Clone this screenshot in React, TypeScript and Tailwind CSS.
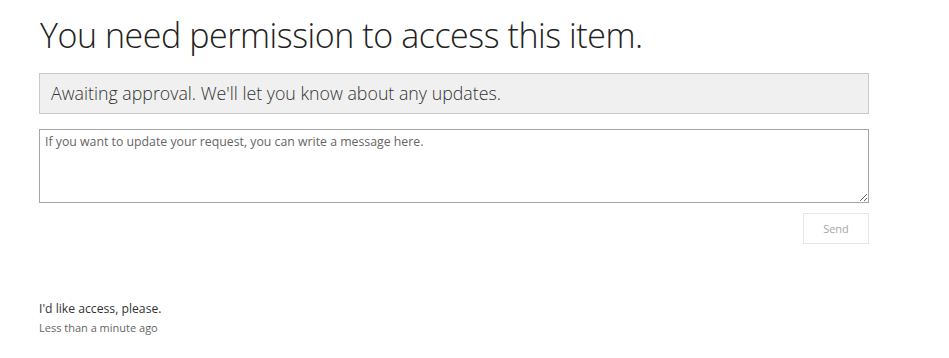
import React from "react";

export default function App() {
  return (
    <div className="w-[949px] h-[358px] bg-white pl-[39px] pt-[10px] text-[#333]" style={{ fontFamily: '"Open Sans", "Noto Sans", sans-serif' }}>
      <div className="w-[830px] flex flex-col">
        <h1 className="text-[34px] leading-[50px] font-light text-[#222] tracking-[-0.45px] pl-[1px]">You need permission to access this item.</h1>
        <div className="mt-[13px] h-[41px] border border-[#c8c8c8] bg-[#f0f0f0] flex items-center pl-[11px] text-[17.8px] font-light text-[#333]">
          Awaiting approval. We'll let you know about any updates.
        </div>
        <textarea
          className="mt-[15px] h-[74px] w-full border border-[#a6a6a6] px-[5px] py-[3px] text-[12.3px] text-[#333] placeholder:text-[#666] outline-none"
          style={{ fontFamily: '"Open Sans", "Noto Sans", sans-serif' }}
          placeholder="If you want to update your request, you can write a message here."
        />
        <div className="flex justify-end mt-[10px]">
          <button className="w-[66px] h-[31px] border border-[#e6e6e6] bg-white text-[11px] text-[#a6a6a6] pt-[1px]">Send</button>
        </div>
        <div className="mt-[56px] text-[12.2px] text-[#333]">I'd like access, please.</div>
        <div className="mt-[2px] text-[11px] text-[#666]">Less than a minute ago</div>
      </div>
    </div>
  );
}
